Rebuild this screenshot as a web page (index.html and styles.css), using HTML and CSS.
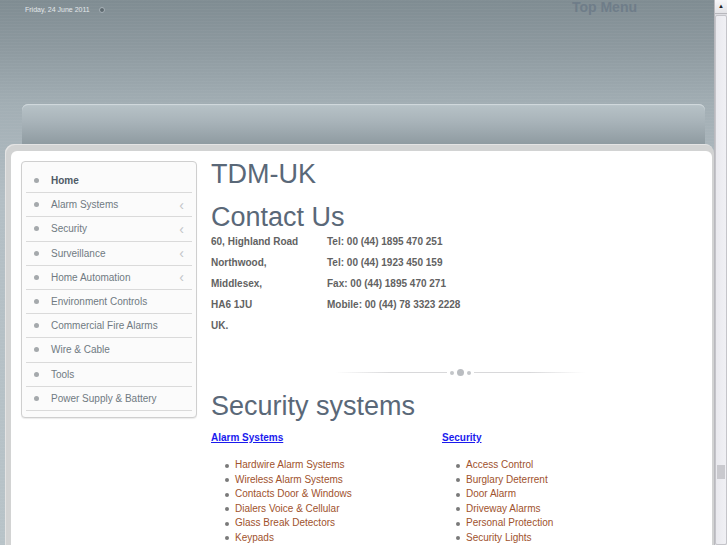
FILE: index.html
```html
<!DOCTYPE html>
<html>
<head>
<meta charset="utf-8">
<title>TDM-UK Contact Us</title>
<link rel="stylesheet" href="styles.css">
</head>
<body>
<div class="window">
  <div class="page">
    <div class="topbar">
      <div class="date">Friday, 24 June 2011 <span class="dot-icon"></span></div>
      <div class="topmenu">Top Menu</div>
    </div>
    <div class="headbar"></div>
    <div class="main">
      <div class="inner">
        <aside class="sidebar">
          <ul class="menu">
            <li class="active"><span class="bul"></span><span class="lbl">Home</span></li>
            <li><span class="bul"></span><span class="lbl">Alarm Systems</span><span class="chev">&lsaquo;</span></li>
            <li><span class="bul"></span><span class="lbl">Security</span><span class="chev">&lsaquo;</span></li>
            <li><span class="bul"></span><span class="lbl">Surveillance</span><span class="chev">&lsaquo;</span></li>
            <li><span class="bul"></span><span class="lbl">Home Automation</span><span class="chev">&lsaquo;</span></li>
            <li><span class="bul"></span><span class="lbl">Environment Controls</span></li>
            <li><span class="bul"></span><span class="lbl">Commercial Fire Alarms</span></li>
            <li><span class="bul"></span><span class="lbl">Wire &amp; Cable</span></li>
            <li><span class="bul"></span><span class="lbl">Tools</span></li>
            <li><span class="bul"></span><span class="lbl">Power Supply &amp; Battery</span></li>
          </ul>
        </aside>
        <section class="content">
          <h1 class="title">TDM-UK</h1>
          <h2 class="title">Contact Us</h2>
          <div class="contact">
            <div>60, Highland Road</div><div>Tel: 00 (44) 1895 470 251</div>
            <div>Northwood,</div><div>Tel: 00 (44) 1923 450 159</div>
            <div>Middlesex,</div><div>Fax: 00 (44) 1895 470 271</div>
            <div>HA6 1JU</div><div>Mobile: 00 (44) 78 3323 2228</div>
            <div>UK.</div><div></div>
          </div>
          <div class="divider">
            <span class="line"></span><span class="d s"></span><span class="d l"></span><span class="d s"></span><span class="line"></span>
          </div>
          <h2 class="title sec">Security systems</h2>
          <div class="cols">
            <div class="col">
              <a class="colhead" href="#">Alarm Systems</a>
              <ul class="links">
                <li>Hardwire Alarm Systems</li>
                <li>Wireless Alarm Systems</li>
                <li>Contacts Door &amp; Windows</li>
                <li>Dialers Voice &amp; Cellular</li>
                <li>Glass Break Detectors</li>
                <li>Keypads</li>
              </ul>
            </div>
            <div class="col">
              <a class="colhead" href="#">Security</a>
              <ul class="links">
                <li>Access Control</li>
                <li>Burglary Deterrent</li>
                <li>Door Alarm</li>
                <li>Driveway Alarms</li>
                <li>Personal Protection</li>
                <li>Security Lights</li>
              </ul>
            </div>
          </div>
        </section>
      </div>
    </div>
  </div>
  <div class="scrollbar">
    <div class="sb-btn">&#9650;</div>
    <div class="sb-thumb"><span class="grip"></span></div>
  </div>
</div>
</body>
</html>
```

FILE: styles.css
```css
html, body {
  margin: 0;
  padding: 0;
}
body {
  font-family: "Liberation Sans", Arial, sans-serif;
  width: 727px;
  height: 545px;
  overflow: hidden;
}
.window {
  display: flex;
  width: 727px;
  height: 545px;
}
.page {
  width: 714px;
  height: 545px;
  overflow: hidden;
  background:
    repeating-linear-gradient(180deg, rgba(255,255,255,0.03) 0, rgba(255,255,255,0.03) 1px, rgba(0,0,0,0) 1px, rgba(0,0,0,0) 3px),
    linear-gradient(180deg, #7f8c92 0px, #8e9aa0 50px, #a2aeb4 105px, #b3bec4 200px, #b8c3c8 545px);
  display: flex;
  flex-direction: column;
}
.topbar {
  height: 105px;
  display: flex;
  justify-content: space-between;
  align-items: flex-start;
}
.date {
  margin: 6px 0 0 25px;
  font-size: 7px;
  color: #e3e8eb;
  display: flex;
  align-items: center;
  gap: 9px;
}
.dot-icon {
  width: 4px;
  height: 4px;
  border-radius: 50%;
  background: #5e6a70;
  border: 1px solid #a8b2b8;
}
.topmenu {
  margin: -1px 77px 0 0;
  font-size: 14px;
  font-weight: bold;
  color: #6f7d89;
}
.headbar {
  margin-left: 22px;
  width: 683px;
  height: 40px;
  border-radius: 6px 6px 0 0;
  background: linear-gradient(180deg, #c3cdd2 0px, #b6c1c6 2px, #a8b3b9 18px, #8f9ba1 40px);
  box-shadow: inset 0 1px 0 #d0d8dc;
  flex: none;
}
.main {
  margin-left: 5px;
  width: 709px;
  flex: 1;
  background: #d2d3d3;
  border-radius: 9px 9px 0 0;
  padding: 7px 2px 0 6px;
  box-sizing: border-box;
  box-shadow: inset 1px 1px 0 #e4e4e4;
}
.inner {
  background: #fff;
  height: 100%;
  border-radius: 6px 6px 0 0;
  padding: 10px 0 0 10px;
  box-sizing: border-box;
  display: flex;
  align-items: flex-start;
  gap: 14px;
}
.sidebar {
  width: 176px;
  box-sizing: border-box;
  border: 1px solid #cfcfcf;
  border-radius: 4px;
  background: #fbfbfb;
  padding: 7px 4px 6px 4px;
  box-shadow: 0 1px 1px rgba(0,0,0,0.08);
  flex: none;
}
.menu {
  list-style: none;
  margin: 0;
  padding: 0;
}
.menu li {
  height: 23.2px;
  border-bottom: 1px solid #dadada;
  display: flex;
  align-items: center;
  font-size: 10px;
  color: #707a82;
  position: relative;
}
.menu li .bul {
  width: 5px;
  height: 5px;
  border-radius: 50%;
  background: #a5a9ac;
  margin: 0 12px 0 8px;
  flex: none;
}
.menu li .lbl {
  flex: 1;
}
.menu li.active {
  font-weight: bold;
  color: #4f5a66;
}
.menu li .chev {
  color: #c2c5c8;
  font-size: 14px;
  line-height: 10px;
  margin-right: 8px;
}
.content {
  width: 480px;
  margin-top: -1px;
}
.title {
  margin: 0;
  font-weight: normal;
  font-size: 27px;
  color: #5a6878;
  line-height: 40px;
}
h1.title {
  line-height: 28px;
}
h2.title {
  margin-top: 9px;
}
.contact {
  display: grid;
  grid-template-columns: 116px auto;
  font-size: 10px;
  font-weight: bold;
  color: #626262;
  line-height: 21px;
  margin-top: -6px;
}
.divider {
  display: flex;
  align-items: center;
  margin: 33px 0 0 124px;
  width: 250px;
  gap: 3px;
}
.divider .line {
  flex: 1;
  height: 1px;
}
.divider .line:first-child {
  background: linear-gradient(90deg, rgba(220,220,222,0), #d8d8da 50%, #d8d8da);
}
.divider .line:last-child {
  background: linear-gradient(90deg, #d8d8da, #d8d8da 50%, rgba(220,220,222,0));
}
.divider .d {
  border-radius: 50%;
  background: #c3c6c9;
}
.divider .s {
  width: 4px;
  height: 4px;
}
.divider .l {
  width: 7px;
  height: 7px;
  background: #babdc1;
}
.title.sec {
  margin-top: 15px;
  line-height: 30px;
}
.cols {
  display: flex;
  margin-top: 6px;
}
.col {
  width: 231px;
}
.colhead {
  font-size: 10px;
  font-weight: bold;
  color: #1a1aee;
  text-decoration: underline;
}
.links {
  margin: 13px 0 0 0;
  padding-left: 24px;
  font-size: 10px;
  line-height: 14.5px;
  color: #a0522d;
  list-style: none;
}
.links li {
  position: relative;
}
.links li::before {
  content: "";
  position: absolute;
  left: -10px;
  top: 5.5px;
  width: 4px;
  height: 4px;
  border-radius: 50%;
  background: #7a7a7a;
}
.scrollbar {
  width: 13px;
  height: 545px;
  background: #dedee3;
  border-left: 1px solid #b9b9be;
  box-sizing: border-box;
  display: flex;
  flex-direction: column;
}
.sb-btn {
  height: 13px;
  font-size: 6px;
  line-height: 13px;
  text-align: center;
  color: #222;
  background: linear-gradient(180deg, #f7f7f9, #e2e2e6);
  border-bottom: 1px solid #b7b7bc;
}
.sb-thumb {
  flex: 1;
  margin: 1px 0 0 0;
  background: linear-gradient(90deg, #e9e9ee, #f0f0f4);
  border: 1px solid #c4c4c9;
  border-radius: 2px;
  display: flex;
  align-items: flex-end;
  justify-content: center;
  padding-bottom: 65px;
}
.grip {
  width: 8px;
  height: 14px;
  background: radial-gradient(circle, #c9c9ce 0.8px, rgba(0,0,0,0) 1px) 0 0 / 2px 2px;
}
```
